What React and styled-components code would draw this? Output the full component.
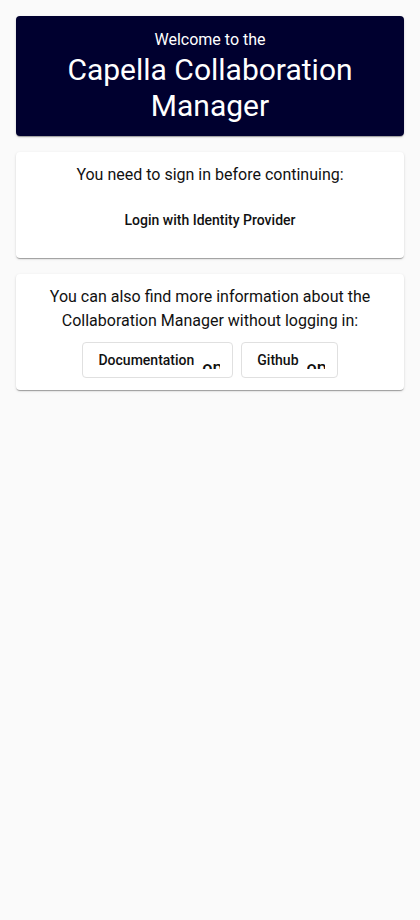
import React from "react";
import styled, { createGlobalStyle } from "styled-components";

const Global = createGlobalStyle`
  html, body { margin: 0; padding: 0; background: #fafafa; }
  body { font-family: Roboto, "Helvetica Neue", sans-serif; color: #111; }
  * { box-sizing: border-box; }
`;

const Page = styled.main`
  display: flex;
  flex-direction: column;
  gap: 16px;
  padding: 16px;
`;

const Card = styled.section`
  background: ${(p) => (p.$dark ? "#00002f" : "#ffffff")};
  color: ${(p) => (p.$dark ? "#ffffff" : "#111")};
  border-radius: 4px;
  box-shadow: 0 2px 1px -1px rgba(0,0,0,.2), 0 1px 1px 0 rgba(0,0,0,.14), 0 1px 3px 0 rgba(0,0,0,.12);
  padding: ${(p) => p.$pad || "11px 16px 12px"};
  display: flex;
  flex-direction: column;
  align-items: center;
  text-align: center;
  gap: ${(p) => p.$gap || "0"};
`;

const Subtitle = styled.div`
  font-size: 16px;
  line-height: 24px;
`;

const Title = styled.h1`
  margin: 0;
  font-weight: 400;
  font-size: 30px;
  line-height: 36px;
`;

const Text = styled.p`
  margin: 0;
  font-size: 16px;
  line-height: 24px;
`;

const TextButton = styled.button`
  border: none;
  background: transparent;
  font-family: Roboto, sans-serif;
  font-size: 14px;
  font-weight: 500;
  color: #111;
  height: 36px;
  padding: 0 12px;
  border-radius: 4px;
  cursor: pointer;
`;

const Row = styled.div`
  display: flex;
  gap: 8px;
  justify-content: center;
`;

const StrokedButton = styled.a`
  display: inline-flex;
  align-items: center;
  gap: 8px;
  height: 36px;
  padding: 0 12px 0 15px;
  border: 1px solid #e0e0e0;
  border-radius: 4px;
  background: #fff;
  font-size: 14px;
  font-weight: 500;
  color: #111;
  text-decoration: none;
`;

const BrokenIcon = styled.span`
  display: inline-block;
  width: 18px;
  height: 18px;
  overflow: hidden;
  font-size: 18px;
  line-height: 33px;
  white-space: nowrap;
  font-weight: 500;
`;

export default function App() {
  return (
    <>
      <Global />
      <Page>
        <Card $dark $pad="12px 16px 12px">
          <Subtitle>Welcome to the</Subtitle>
          <Title>
            Capella Collaboration
            <br />
            Manager
          </Title>
        </Card>
        <Card $pad="11px 16px 20px" $gap="15px">
          <Text>You need to sign in before continuing:</Text>
          <TextButton>Login with Identity Provider</TextButton>
        </Card>
        <Card $pad="11px 16px 12px" $gap="9px">
          <Text>
            You can also find more information about the
            <br />
            Collaboration Manager without logging in:
          </Text>
          <Row>
            <StrokedButton href="#">
              Documentation <BrokenIcon>open_in_new</BrokenIcon>
            </StrokedButton>
            <StrokedButton href="#">
              Github <BrokenIcon>open_in_new</BrokenIcon>
            </StrokedButton>
          </Row>
        </Card>
      </Page>
    </>
  );
}
